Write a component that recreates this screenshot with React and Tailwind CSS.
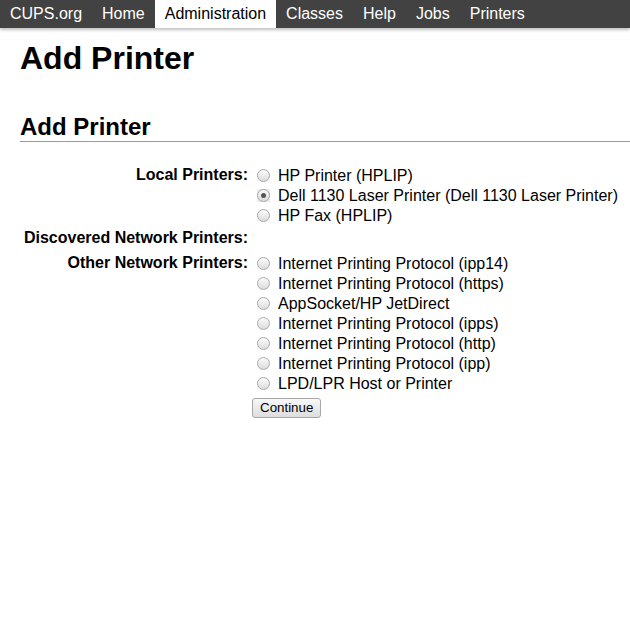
import React, { useState } from 'react';

const navItems = ['CUPS.org', 'Home', 'Administration', 'Classes', 'Help', 'Jobs', 'Printers'];

const localPrinters = ['HP Printer (HPLIP)', 'Dell 1130 Laser Printer (Dell 1130 Laser Printer)', 'HP Fax (HPLIP)'];

const otherPrinters = [
    'Internet Printing Protocol (ipp14)',
    'Internet Printing Protocol (https)',
    'AppSocket/HP JetDirect',
    'Internet Printing Protocol (ipps)',
    'Internet Printing Protocol (http)',
    'Internet Printing Protocol (ipp)',
    'LPD/LPR Host or Printer',
];

// Radio bulat ala browser bawaan
function Radio({ label, checked, onClick }) {
    return (
        <div className="flex items-center h-[20px] cursor-pointer" onClick={onClick}>
            <span className={`ml-[5px] flex items-center justify-center ${checked ? 'bg-[#ececec]' : ''}`}>
                <span className="w-[13px] h-[13px] rounded-full border border-[#a9a9a9] bg-gradient-to-b from-[#fbfbfb] to-[#dcdcdc] flex items-center justify-center">
                    {checked && <span className="w-[5px] h-[5px] rounded-full bg-[#555]" />}
                </span>
            </span>
            <span className="ml-[8px] whitespace-nowrap relative top-[1px]">{label}</span>
        </div>
    );
}

export default function App() {
    const [selected, setSelected] = useState('local-1');

    return (
        <div className="min-h-screen bg-white text-black text-[16px]" style={{ fontFamily: '"Liberation Sans", Arial, sans-serif' }}>
            {/* Navigasi atas */}
            <nav className="h-[28px] bg-[#424242] flex shadow-[0_2px_3px_rgba(0,0,0,0.25)]">
                {navItems.map((item) => (
                    <a
                        key={item}
                        href="#"
                        className={`px-[10px] h-full flex items-center leading-none ${item === 'Administration' ? 'bg-white text-black' : 'text-white'}`}
                    >
                        {item}
                    </a>
                ))}
            </nav>

            <div className="pl-[20px]">
                <h1 className="mt-[12px] text-[32px] font-bold leading-[37px]">Add Printer</h1>

                <h2 className="mt-[36px] text-[24px] font-bold leading-[28px] border-b border-[#9a9a9a]">Add Printer</h2>

                <div className="mt-[23px]">
                    {/* Printer lokal */}
                    <div className="flex">
                        <div className="w-[228px] text-right font-bold leading-[20px] whitespace-nowrap">Local Printers:</div>
                        <div className="ml-[4px]">
                            {localPrinters.map((p, i) => (
                                <Radio key={p} label={p} checked={selected === `local-${i}`} onClick={() => setSelected(`local-${i}`)} />
                            ))}
                        </div>
                    </div>

                    <div className="flex mt-[3px]">
                        <div className="w-[228px] text-right font-bold leading-[20px] whitespace-nowrap">Discovered Network Printers:</div>
                    </div>

                    <div className="flex mt-[5px]">
                        <div className="w-[228px] text-right font-bold leading-[20px] whitespace-nowrap">Other Network Printers:</div>
                        <div className="ml-[4px]">
                            {otherPrinters.map((p, i) => (
                                <Radio key={p} label={p} checked={selected === `other-${i}`} onClick={() => setSelected(`other-${i}`)} />
                            ))}
                        </div>
                    </div>

                    <div className="flex mt-[5px]">
                        <div className="w-[228px]" />
                        <button
                            type="button"
                            className="ml-[4px] h-[20px] px-[7px] text-[13.33px] leading-none border border-[#a6a6a6] rounded-[3px] bg-gradient-to-b from-[#f8f8f8] to-[#dddddd] text-black"
                        >
                            Continue
                        </button>
                    </div>
                </div>
            </div>
        </div>
    );
}
